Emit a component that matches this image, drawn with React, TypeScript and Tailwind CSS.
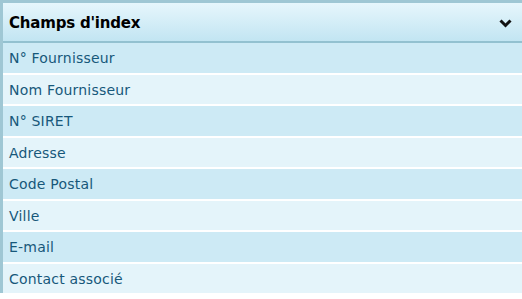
const fields = [
  'N° Fournisseur',
  'Nom Fournisseur',
  'N° SIRET',
  'Adresse',
  'Code Postal',
  'Ville',
  'E-mail',
  'Contact associé',
];

export default function App() {
  return (
    <div className="h-[299px] w-[522px] overflow-hidden bg-white font-['DejaVu_Sans',Verdana,sans-serif]">
      <div className="border-l-[3px] border-t-[3px] border-[#9fc7d4]">
        {/* Header */}
        <div className="flex h-[40px] items-center justify-between border-b-2 border-[#93c1d0] bg-gradient-to-b from-[#e6f6fc] to-[#c2e5f2] pl-[6px] pr-[10px] pt-[3px]">
          <span className="text-[15px] font-bold tracking-[-0.2px] text-black">Champs d'index</span>
          <svg width="13" height="9" viewBox="0 0 13 9">
            <polyline points="1.5,1.5 6.5,6.5 11.5,1.5" fill="none" stroke="#111" strokeWidth="3" />
          </svg>
        </div>

        {/* Rows */}
        <div className="flex flex-col gap-[2px]">
          {fields.map((f, i) => (
            <div
              key={f}
              className={`flex h-[29.5px] items-center pl-[6px] pt-[2px] text-[14px] tracking-[0.2px] text-[#17587a] ${
                i % 2 === 0 ? 'bg-[#cdeaf5]' : 'bg-[#e4f4fa]'
              }`}
            >
              {f}
            </div>
          ))}
        </div>
      </div>
    </div>
  );
}
